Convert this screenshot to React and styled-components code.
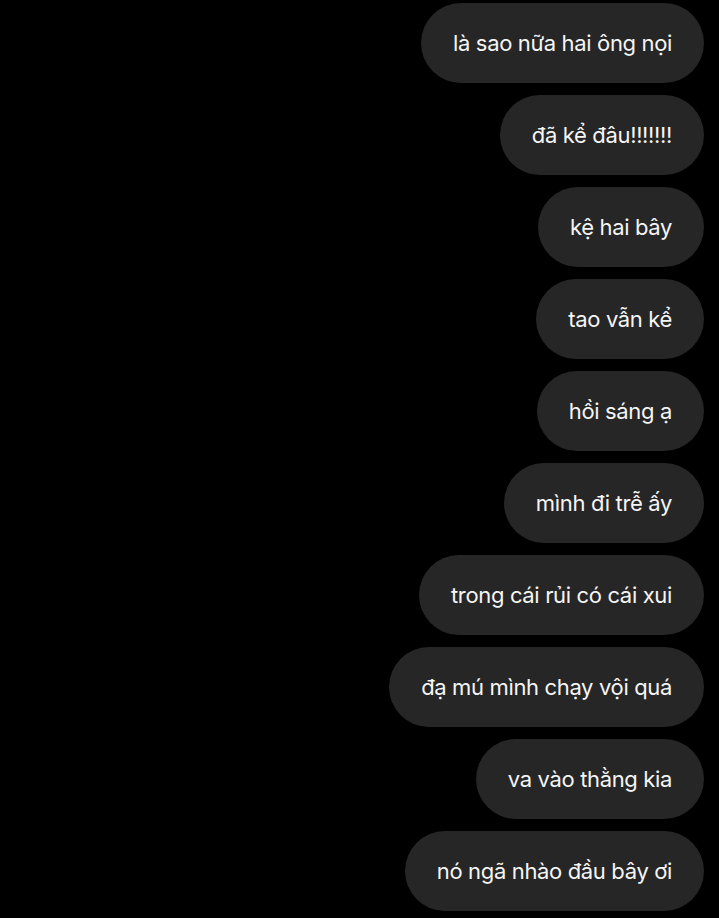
import React from 'react';
import styled, { createGlobalStyle } from 'styled-components';

const Global = createGlobalStyle`
  html, body {
    margin: 0;
    background: #000;
  }
  body {
    font-family: Inter, "Noto Sans", "Liberation Sans", sans-serif;
  }
`;

const Thread = styled.div`
  width: 719px;
  height: 918px;
  overflow: hidden;
  background: #000;
  display: flex;
  flex-direction: column;
  align-items: flex-end;
  gap: 12px;
  padding: 3px 15px 0 0;
  box-sizing: border-box;
`;

const Bubble = styled.div`
  height: 80px;
  flex-shrink: 0;
  display: flex;
  align-items: center;
  padding: 0 32px;
  border-radius: 40px;
  background: #262626;
  color: #f5f5f5;
  font-size: 22px;
  letter-spacing: -0.35px;
  white-space: nowrap;
`;

const messages = [
  'là sao nữa hai ông nọi',
  'đã kể đâu!!!!!!!',
  'kệ hai bây',
  'tao vẫn kể',
  'hồi sáng ạ',
  'mình đi trễ ấy',
  'trong cái rủi có cái xui',
  'đạ mú mình chạy vội quá',
  'va vào thằng kia',
  'nó ngã nhào đầu bây ơi',
];

const App = () => {
  return (
    <Thread>
      <Global />
      {messages.map((m, i) => (
        <Bubble key={i}>{m}</Bubble>
      ))}
    </Thread>
  );
};

export default App;
